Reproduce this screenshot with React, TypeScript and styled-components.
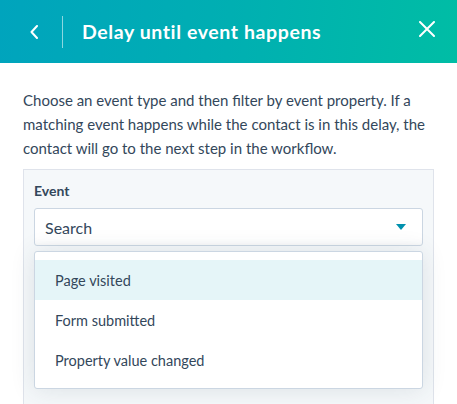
import React from 'react';
import styled, { createGlobalStyle } from 'styled-components';

const GlobalStyle = createGlobalStyle`
  html, body {
    margin: 0;
    padding: 0;
    background: #fff;
  }
  body {
    font-family: Lato, 'Open Sans', sans-serif;
    color: #33475b;
    -webkit-font-smoothing: antialiased;
  }
`;

const options = ['Page visited', 'Form submitted', 'Property value changed'];

const App = () => {
  return (
    <>
      <GlobalStyle />
      <Panel>
        <Header>
          <IconButton aria-label='Back'>
            <svg width='10' height='14' viewBox='0 0 10 14'>
              <path
                d='M8 1 L2.5 7 L8 13'
                fill='none'
                stroke='#fff'
                strokeWidth='2'
                strokeLinecap='round'
                strokeLinejoin='round'
              />
            </svg>
          </IconButton>
          <Divider />
          <Title>Delay until event happens</Title>
          <CloseButton aria-label='Close'>
            <svg width='16' height='16' viewBox='0 0 16 16'>
              <path
                d='M1 1 L15 15 M15 1 L1 15'
                fill='none'
                stroke='#fff'
                strokeWidth='2'
                strokeLinecap='round'
              />
            </svg>
          </CloseButton>
        </Header>
        <Body>
          <Description>
            Choose an event type and then filter by event property. If a
            matching event happens while the contact is in this delay, the
            contact will go to the next step in the workflow.
          </Description>
          <FieldBox>
            <Label>Event</Label>
            <Select>
              <Placeholder>Search</Placeholder>
              <Caret />
            </Select>
            <Menu>
              {options.map((opt, i) => (
                <Option key={opt} active={i === 0}>
                  {opt}
                </Option>
              ))}
            </Menu>
          </FieldBox>
        </Body>
      </Panel>
    </>
  );
};

export default App;

const Panel = styled.div`
  width: 457px;
  height: 404px;
  overflow: hidden;
  display: flex;
  flex-direction: column;
`;

const Header = styled.div`
  height: 63px;
  flex-shrink: 0;
  display: flex;
  align-items: center;
  padding: 0 22px 0 24px;
  box-sizing: border-box;
  background: linear-gradient(95deg, #00a4bd 0%, #00afb2 50%, #00bda5 100%);
  color: #fff;
`;

const IconButton = styled.button`
  border: none;
  background: transparent;
  padding: 0;
  width: 20px;
  height: 20px;
  display: flex;
  align-items: center;
  justify-content: center;
  cursor: pointer;
`;

const Divider = styled.div`
  width: 1px;
  height: 32px;
  background: rgba(255, 255, 255, 0.55);
  margin: 0 19px 0 18px;
`;

const Title = styled.h1`
  flex: 1;
  margin: 0;
  font-size: 19.5px;
  font-weight: 700;
  letter-spacing: 0.6px;
  color: #fff;
`;

const CloseButton = styled(IconButton)`
  width: 16px;
  height: 16px;
  margin-top: -6px;
`;

const Body = styled.div`
  flex: 1;
  padding: 0 23px;
  display: flex;
  flex-direction: column;
`;

const Description = styled.p`
  margin: 25px 0 9px;
  font-size: 15px;
  line-height: 24px;
  color: #33475b;
`;

const FieldBox = styled.div`
  flex: 1;
  background: #f5f8fa;
  border: 1px solid #dfe3eb;
  padding: 9px 10px 40px;
`;

const Label = styled.div`
  font-size: 14px;
  line-height: 24px;
  font-weight: 700;
  color: #33475b;
  margin-bottom: 5px;
`;

const Select = styled.div`
  height: 38px;
  box-sizing: border-box;
  background: #fff;
  border: 1px solid #cbd6e2;
  border-radius: 3px;
  display: flex;
  align-items: center;
  padding: 0 16px 0 10px;
  box-shadow: inset 0 -6px 8px -8px rgba(45, 62, 80, 0.12);
`;

const Placeholder = styled.span`
  flex: 1;
  font-size: 16px;
  color: #33475b;
`;

const Caret = styled.span`
  width: 0;
  height: 0;
  border-left: 5.5px solid transparent;
  border-right: 5.5px solid transparent;
  border-top: 6px solid #0091ae;
`;

const Menu = styled.div`
  margin-top: 5px;
  background: #fff;
  border: 1px solid #cbd6e2;
  border-radius: 3px;
  padding: 8px 0;
  box-shadow: 0 1px 24px 0 rgba(45, 62, 80, 0.12);
`;

const Option = styled.div<{ active?: boolean }>`
  height: 40px;
  display: flex;
  align-items: center;
  padding: 0 20px;
  font-size: 14.5px;
  color: #33475b;
  background: ${(p) => (p.active ? '#e5f5f8' : 'transparent')};
`;
